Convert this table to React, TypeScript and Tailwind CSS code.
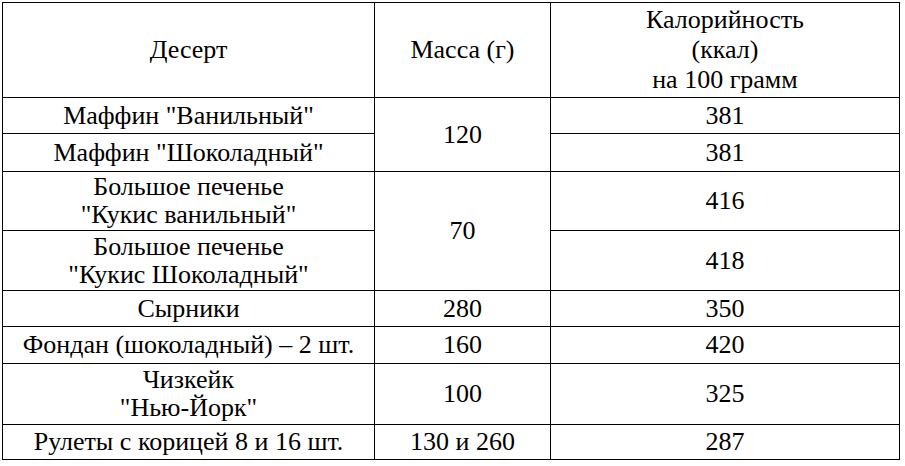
import React from 'react'

type Row = {
  name: React.ReactNode
  mass?: { value: string; span: number }
  kcal: string
  h: string
}

const rows: Row[] = [
  { name: <>Маффин "Ванильный"</>, mass: { value: '120', span: 2 }, kcal: '381', h: 'h-[36px]' },
  { name: <>Маффин "Шоколадный"</>, kcal: '381', h: 'h-[38px]' },
  {
    name: (
      <>
        Большое печенье
        <br />
        "Кукис ванильный"
      </>
    ),
    mass: { value: '70', span: 2 },
    kcal: '416',
    h: 'h-[59px]',
  },
  {
    name: (
      <>
        Большое печенье
        <br />
        "Кукис Шоколадный"
      </>
    ),
    kcal: '418',
    h: 'h-[60px]',
  },
  { name: <>Сырники</>, mass: { value: '280', span: 1 }, kcal: '350', h: 'h-[36px]' },
  { name: <>Фондан (шоколадный) – 2 шт.</>, mass: { value: '160', span: 1 }, kcal: '420', h: 'h-[37px]' },
  {
    name: (
      <>
        Чизкейк
        <br />
        "Нью-Йорк"
      </>
    ),
    mass: { value: '100', span: 1 },
    kcal: '325',
    h: 'h-[61px]',
  },
  { name: <>Рулеты с корицей 8 и 16 шт.</>, mass: { value: '130 и 260', span: 1 }, kcal: '287', h: 'h-[35px]' },
]

const cell =
  'border border-black p-0 text-center align-middle font-normal text-black text-[26px] leading-[28px] ![font-family:Liberation_Serif,serif]'
const txt = '![font-family:Liberation_Serif,serif]'

export default function App() {
  return (
    <div className="w-[905px] h-[466px] bg-white pl-[2px] pt-[2px]">
      <table className="border-collapse table-fixed w-[897px] ![font-family:Liberation_Serif,serif] text-[26px] leading-[28px] text-black">
        <colgroup>
          <col className="w-[372px]" />
          <col className="w-[176px]" />
          <col className="w-[349px]" />
        </colgroup>
        <thead>
          <tr className="h-[95px]">
            <th className={cell}>
              <span className={txt}>Десерт</span>
            </th>
            <th className={cell}>
              <span className={txt}>Масса (г)</span>
            </th>
            <th className={`${cell} !leading-[30px]`}>
              <span className={txt}>
                Калорийность
                <br />
                (ккал)
                <br />
                на 100 грамм
              </span>
            </th>
          </tr>
        </thead>
        <tbody>
          {rows.map((r, i) => (
            <tr key={i} className={r.h}>
              <td className={cell}>
                <span className={txt}>{r.name}</span>
              </td>
              {r.mass && (
                <td className={cell} rowSpan={r.mass.span}>
                  <span className={txt}>{r.mass.value}</span>
                </td>
              )}
              <td className={cell}>
                <span className={txt}>{r.kcal}</span>
              </td>
            </tr>
          ))}
        </tbody>
      </table>
    </div>
  )
}
